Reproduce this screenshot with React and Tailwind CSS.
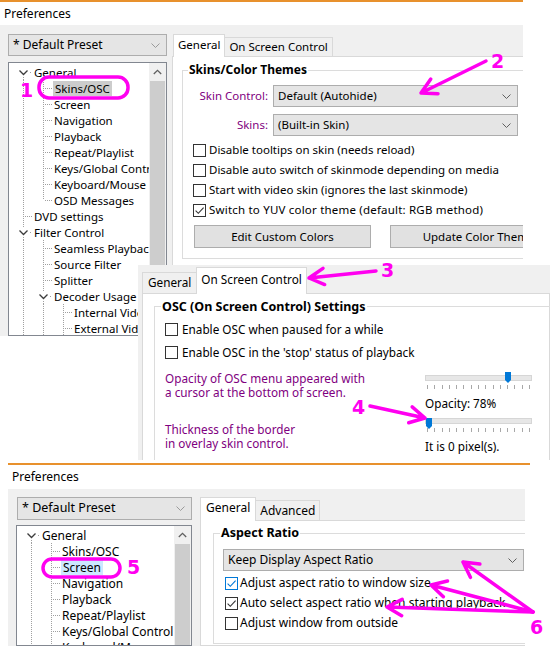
import React from 'react'

const LINE = '#a0a0a0'
const MAG = '#ff00f0'

function TreeCell({ kind }) {
  const dash = { stroke: LINE, strokeDasharray: '1 1', strokeWidth: 1 }
  return (
    <svg width="20" height="16" viewBox="0 0 20 16" className="shrink-0">
      {kind === 'guide' && <line x1="10.5" y1="0" x2="10.5" y2="16" {...dash} />}
      {(kind === 'mid' || kind === 'last') && (
        <>
          <line x1="10.5" y1="0" x2="10.5" y2={kind === 'mid' ? 16 : 8} {...dash} />
          <line x1="12" y1="8.5" x2="20" y2="8.5" {...dash} />
        </>
      )}
      {(kind === 'chevB' || kind === 'chevTB') && (
        <>
          {kind === 'chevTB' && <line x1="10.5" y1="0" x2="10.5" y2="4" {...dash} />}
          <line x1="10.5" y1="13" x2="10.5" y2="16" {...dash} />
          <path d="M6.5 6.5 L10.5 10.5 L14.5 6.5" fill="none" stroke="#3c3c3c" strokeWidth="1.3" />
          <rect x="17" y="8" width="1" height="1" fill={LINE} />
        </>
      )}
    </svg>
  )
}

function TreeRow({ cells, label, sel }) {
  return (
    <div className="flex items-center h-[16px] whitespace-nowrap">
      {cells.map((k, i) => (
        <TreeCell key={i} kind={k} />
      ))}
      <span className={`px-[1px] leading-[15px] ${sel || ''}`}>{label}</span>
    </div>
  )
}

function ScrollBar() {
  return (
    <div className="w-[17px] shrink-0 bg-[#f0f0f0] flex flex-col">
      <div className="h-[17px] flex items-center justify-center">
        <svg width="9" height="6" viewBox="0 0 9 6">
          <path d="M0.8 5 L4.5 1.3 L8.2 5" fill="none" stroke="#606060" strokeWidth="1.3" />
        </svg>
      </div>
      <div className="flex-1 mx-[1px] mt-[1px] bg-[#cdcdcd]" />
    </div>
  )
}

function ComboArrow({ color = '#606060' }) {
  return (
    <svg width="9" height="5" viewBox="0 0 9 5" className="shrink-0">
      <path d="M0.5 0.5 L4.5 4.5 L8.5 0.5" fill="none" stroke={color} strokeWidth="1" />
    </svg>
  )
}

function Combo({ text, className, arrow }) {
  return (
    <div className={`flex items-center justify-between border border-[#adadad] bg-[#e5e5e5] pl-[4px] pr-[6px] whitespace-nowrap ${className}`}>
      <span>{text}</span>
      <ComboArrow color={arrow} />
    </div>
  )
}

function Box({ checked, blue }) {
  return (
    <span
      className={`w-[13px] h-[13px] border bg-white flex items-center justify-center shrink-0 ${
        blue ? 'border-[#0078d7]' : 'border-[#333333]'
      }`}
    >
      {checked && (
        <svg width="11" height="11" viewBox="0 0 11 11">
          <path d="M1.6 5.6 L4.3 8.3 L9.6 2.6" fill="none" stroke={blue ? '#0078d7' : '#333333'} strokeWidth="1.1" />
        </svg>
      )}
    </span>
  )
}

function Check({ label, checked, blue, rowClass, gapClass }) {
  return (
    <div className={`flex items-center whitespace-nowrap ${rowClass}`}>
      <Box checked={checked} blue={blue} />
      <span className={gapClass}>{label}</span>
    </div>
  )
}

function Slider({ thumbClass }) {
  return (
    <div className="relative w-[107px] h-[18px]">
      <div className="mt-[3px] h-[6px] bg-[#e7e7e7] border border-[#d6d6d6]" />
      <svg width="6" height="11" viewBox="0 0 6 11" className={`absolute top-0 ${thumbClass}`}>
        <path d="M0 0 H6 V8 L3 11 L0 8 Z" fill="#0078d7" />
      </svg>
      <div className="mt-[4px] flex justify-between px-[2px]">
        {Array.from({ length: 15 }).map((_, i) => (
          <span key={i} className="w-px h-[4px] bg-[#a8a8a8]" />
        ))}
      </div>
    </div>
  )
}

const G = 'guide'

const tree1 = [
  [['chevB'], 'General'],
  [[G, 'mid'], 'Skins/OSC', 'bg-[#cccccc] px-[2px]'],
  [[G, 'mid'], 'Screen'],
  [[G, 'mid'], 'Navigation'],
  [[G, 'mid'], 'Playback'],
  [[G, 'mid'], 'Repeat/Playlist'],
  [[G, 'mid'], 'Keys/Global Control'],
  [[G, 'mid'], 'Keyboard/Mouse'],
  [[G, 'last'], 'OSD Messages'],
  [['mid'], 'DVD settings'],
  [['chevTB'], 'Filter Control'],
  [[G, 'mid'], 'Seamless Playback'],
  [[G, 'mid'], 'Source Filter'],
  [[G, 'mid'], 'Splitter'],
  [[G, 'chevTB'], 'Decoder Usage'],
  [[G, G, 'mid'], 'Internal Video Decoder'],
  [[G, G, 'mid'], 'External Video Decoder'],
  [[G, G, 'mid'], 'Audio Decoder'],
]

const tree3 = [
  [['chevB'], 'General'],
  [[G, 'mid'], 'Skins/OSC'],
  [[G, 'mid'], 'Screen', 'bg-[#cce8ff] px-[2px]'],
  [[G, 'mid'], 'Navigation'],
  [[G, 'mid'], 'Playback'],
  [[G, 'mid'], 'Repeat/Playlist'],
  [[G, 'mid'], 'Keys/Global Control'],
  [[G, 'mid'], 'Keyboard/Mouse'],
]

function arrow(x1, y1, x2, y2, len = 17, spread = 0.5) {
  const a = Math.atan2(y1 - y2, x1 - x2)
  const hx1 = x2 + len * Math.cos(a + spread)
  const hy1 = y2 + len * Math.sin(a + spread)
  const hx2 = x2 + len * Math.cos(a - spread)
  const hy2 = y2 + len * Math.sin(a - spread)
  return `M${x1} ${y1} L${x2} ${y2} M${hx1} ${hy1} L${x2} ${y2} L${hx2} ${hy2}`
}

function Num({ children, className }) {
  return (
    <span className={`absolute z-30 font-bold text-[19px] leading-none text-[#ff00f0] font-['DejaVu_Sans',sans-serif] ${className}`}>
      {children}
    </span>
  )
}

export default function App() {
  return (
    <div className="relative w-[550px] h-[646px] bg-white overflow-hidden text-black font-['Noto_Sans',sans-serif]">
      {/* first dialog: General tab */}
      <div className="w-[523px] h-[336px] flex flex-col border-t-[2px] border-[#e8912d] overflow-hidden text-[11.5px]">
        <div className="h-[23px] shrink-0 flex items-center pl-[4px] text-[12px]">Preferences</div>
        <div className="flex-1 bg-[#f0f0f0] flex pt-[9px] pl-[8px] gap-[5px] min-h-0">
          <div className="w-[159px] shrink-0 flex flex-col gap-[6px]">
            <Combo text="* Default Preset" className="h-[22px] text-[12px]" arrow="#9a9a9a" />
            <div className="flex-1 border border-[#828790] bg-white flex min-h-0 overflow-hidden">
              <div className="flex-1 min-w-0 overflow-hidden pl-[4px] pt-[1px]">
                {tree1.map(([c, l, s]) => (
                  <TreeRow key={l} cells={c} label={l} sel={s} />
                ))}
              </div>
              <ScrollBar />
            </div>
          </div>
          <div className="w-[420px] shrink-0 flex flex-col">
            <div className="flex items-end h-[22px] pl-[1px]">
              <div className="h-[23px] -mb-px bg-white border border-b-0 border-[#d9d9d9] px-[4px] flex items-start pt-[1px] z-10">
                General
              </div>
              <div className="h-[19px] bg-[#f0f0f0] border border-b-0 border-l-0 border-[#d9d9d9] px-[4px] flex items-center">
                On Screen Control
              </div>
            </div>
            <div className="flex-1 bg-white border border-[#d9d9d9] pl-[9px]">
              <fieldset className="mt-[5px] w-[400px] border border-[#dcdcdc] pb-[10px]">
                <legend className="ml-[5px] px-[1px] font-bold text-[12px] leading-[16px]">Skins/Color Themes</legend>
                <div className="mt-[7px] flex items-center gap-[5px]">
                  <span className="w-[85px] text-right text-[#800080]">Skin Control:</span>
                  <Combo text="Default (Autohide)" className="w-[245px] h-[22px]" />
                </div>
                <div className="mt-[7px] flex items-center gap-[5px]">
                  <span className="w-[85px] text-right text-[#800080]">Skins:</span>
                  <Combo text="(Built-in Skin)" className="w-[245px] h-[22px]" />
                </div>
                <div className="mt-[4px] pl-[10px]">
                  <Check label="Disable tooltips on skin (needs reload)" rowClass="h-[20px]" gapClass="ml-[3px]" />
                  <Check label="Disable auto switch of skinmode depending on media" rowClass="h-[20px]" gapClass="ml-[3px]" />
                  <Check label="Start with video skin (ignores the last skinmode)" rowClass="h-[20px]" gapClass="ml-[3px]" />
                  <Check label="Switch to YUV color theme (default: RGB method)" checked rowClass="h-[20px]" gapClass="ml-[3px] tracking-[0.2px]" />
                </div>
                <div className="mt-[5px] pl-[11px] flex gap-[19px]">
                  <div className="w-[177px] h-[23px] border border-[#adadad] bg-[#e1e1e1] flex items-center justify-center">
                    Edit Custom Colors
                  </div>
                  <div className="w-[177px] h-[23px] border border-[#adadad] bg-[#e1e1e1] flex items-center justify-center whitespace-nowrap">
                    Update Color Theme
                  </div>
                </div>
              </fieldset>
            </div>
          </div>
        </div>
      </div>

      {/* third dialog: Screen */}
      <div className="mt-[127px] ml-[8px] w-[522px] h-[2px] bg-[#e8912d]" />
      <div className="ml-[8px] w-[517px] h-[181px] flex flex-col overflow-hidden text-[12px]">
        <div className="h-[24px] shrink-0 flex items-center pl-[4px]">Preferences</div>
        <div className="flex-1 bg-[#f0f0f0] flex pt-[8px] pl-[8px] gap-[8px] min-h-0">
          <div className="w-[176px] shrink-0 flex flex-col gap-[5px]">
            <Combo text="* Default Preset" className="ml-px h-[23px] text-[12.5px]" arrow="#9a9a9a" />
            <div className="flex-1 border border-[#828790] bg-white flex min-h-0 overflow-hidden">
              <div className="flex-1 min-w-0 overflow-hidden pl-[4px] pt-[1px]">
                {tree3.map(([c, l, s]) => (
                  <TreeRow key={l} cells={c} label={l} sel={s} />
                ))}
              </div>
              <ScrollBar />
            </div>
          </div>
          <div className="w-[340px] shrink-0 flex flex-col">
            <div className="flex items-end h-[23px]">
              <div className="h-[24px] -mb-px bg-white border border-b-0 border-[#d9d9d9] px-[5px] flex items-start pt-[1px] z-10">
                General
              </div>
              <div className="h-[20px] bg-[#f0f0f0] border border-b-0 border-l-0 border-[#d9d9d9] px-[4px] flex items-center">
                Advanced
              </div>
            </div>
            <div className="flex-1 bg-white border border-[#d9d9d9] pl-[12px]">
              <fieldset className="mt-[4px] w-[340px] border border-[#dcdcdc] pb-[10px]">
                <legend className="ml-[6px] px-[1px] font-bold text-[12.5px] leading-[16px]">Aspect Ratio</legend>
                <div className="mt-[8px] pl-[9px]">
                  <Combo text="Keep Display Aspect Ratio" className="w-[301px] h-[22px]" />
                </div>
                <div className="mt-[2px] pl-[11px]">
                  <Check label="Adjust aspect ratio to window size" checked blue rowClass="h-[20px]" gapClass="ml-[2px]" />
                  <Check label="Auto select aspect ratio when starting playback" checked rowClass="h-[20px]" gapClass="ml-[2px]" />
                  <Check label="Adjust window from outside" rowClass="h-[20px]" gapClass="ml-[2px]" />
                </div>
              </fieldset>
            </div>
          </div>
        </div>
      </div>

      {/* second dialog: On Screen Control tab, pasted over */}
      <div className="absolute left-[138px] top-[265px] w-[412px] h-[195px] bg-[#f0f0f0] flex flex-col pl-[4px] overflow-hidden text-[11.75px]">
        <div className="flex items-end h-[28px] shrink-0">
          <div className="h-[21px] bg-[#f0f0f0] border border-b-0 border-r-0 border-[#d9d9d9] px-[5px] flex items-center">
            General
          </div>
          <div className="h-[27px] -mb-px bg-white border border-b-0 border-[#d9d9d9] px-[4px] flex items-start pt-[3px] z-10">
            On Screen Control
          </div>
        </div>
        <div className="flex-1 bg-white border border-[#d9d9d9] pl-[11px]">
          <fieldset className="mt-[4px] w-[420px] h-[200px] border border-[#dcdcdc]">
            <legend className="ml-[6px] px-[1px] font-bold text-[12.5px] leading-[17px]">OSC (On Screen Control) Settings</legend>
            <div className="mt-[3px] pl-[10px]">
              <Check label="Enable OSC when paused for a while" rowClass="h-[23px]" gapClass="ml-[4px]" />
              <Check label="Enable OSC in the 'stop' status of playback" rowClass="h-[23px]" gapClass="ml-[4px]" />
            </div>
            <div className="mt-[8px] pl-[10px] flex">
              <div className="w-[260px] text-[#800080] leading-[13.5px]">
                <p>Opacity of OSC menu appeared with</p>
                <p>a cursor at the bottom of screen.</p>
                <p className="mt-[24px]">Thickness of the border</p>
                <p>in overlay skin control.</p>
              </div>
              <div className="flex flex-col">
                <Slider thumbClass="left-[80px]" />
                <p className="mt-[5px] leading-[16px]">Opacity: 78%</p>
                <div className="mt-[4px]">
                  <Slider thumbClass="left-[1px]" />
                </div>
                <p className="mt-[2px] leading-[16px]">It is 0 pixel(s).</p>
              </div>
            </div>
          </fieldset>
        </div>
      </div>

      {/* magenta annotations */}
      <svg className="absolute inset-0 z-20 pointer-events-none" width="550" height="646" viewBox="0 0 550 646">
        <g fill="none" stroke={MAG} strokeWidth="3.5" strokeLinecap="round" strokeLinejoin="round">
          <rect x="39" y="77" width="89" height="21" rx="10" />
          <rect x="43" y="559" width="77" height="18" rx="9" />
          <path d={arrow(486, 61, 421, 93)} />
          <path d={arrow(376, 271, 309, 278)} />
          <path d={arrow(370, 406, 425, 418)} />
          <path d={arrow(533, 612, 463, 562)} />
          <path d={arrow(533, 612, 431, 585)} />
          <path d={arrow(533, 612, 387, 607)} />
        </g>
      </svg>
      <Num className="left-[20px] top-[81px]">1</Num>
      <Num className="left-[491px] top-[52px]">2</Num>
      <Num className="left-[381px] top-[261px]">3</Num>
      <Num className="left-[352px] top-[398px]">4</Num>
      <Num className="left-[127px] top-[558px]">5</Num>
      <Num className="left-[530px] top-[618px]">6</Num>
    </div>
  )
}
